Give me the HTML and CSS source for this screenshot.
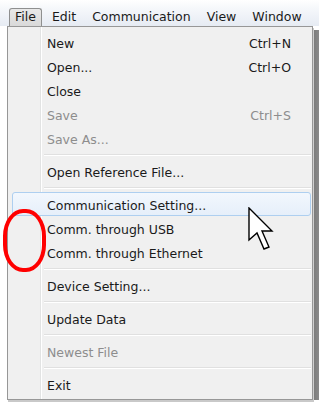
FILE: index.html
```html
<!DOCTYPE html>
<html>
<head>
<meta charset="utf-8">
<link rel="stylesheet" href="styles.css">
</head>
<body>
<div class="screen">
  <div class="menubar">
    <span class="mb-item active">File</span>
    <span class="mb-item">Edit</span>
    <span class="mb-item">Communication</span>
    <span class="mb-item">View</span>
    <span class="mb-item">Window</span>
  </div>
  <div class="area">
    <div class="menu">
      <div class="item"><span>New</span><span class="key">Ctrl+N</span></div>
      <div class="item"><span>Open...</span><span class="key">Ctrl+O</span></div>
      <div class="item"><span>Close</span></div>
      <div class="item disabled"><span>Save</span><span class="key">Ctrl+S</span></div>
      <div class="item disabled"><span>Save As...</span></div>
      <div class="sep"></div>
      <div class="item"><span>Open Reference File...</span></div>
      <div class="sep"></div>
      <div class="item hover"><span>Communication Setting...</span></div>
      <div class="item"><span>Comm. through USB</span></div>
      <div class="item"><span>Comm. through Ethernet</span></div>
      <div class="sep"></div>
      <div class="item"><span>Device Setting...</span></div>
      <div class="sep"></div>
      <div class="item"><span>Update Data</span></div>
      <div class="sep"></div>
      <div class="item disabled"><span>Newest File</span></div>
      <div class="sep"></div>
      <div class="item"><span>Exit</span></div>
    </div>
    <div class="behind"></div>
  </div>
  <div class="mark"></div>
  <svg class="cursor" width="26" height="44" viewBox="0 0 26 44">
    <polygon points="1,1 1,33 9,26 16,42 21,40 14,24 24,24" fill="#fff" stroke="#000" stroke-width="1.4" stroke-linejoin="miter"/>
  </svg>
</div>
</body>
</html>
```
FILE: styles.css
```css
html, body {
  margin: 0;
  padding: 0;
  background: #fff;
}
.screen {
  position: relative;
  width: 319px;
  height: 407px;
  overflow: hidden;
  font-family: "DejaVu Sans", sans-serif;
  font-size: 12.5px;
  color: #1a1a1a;
}
.menubar {
  height: 26px;
  box-sizing: border-box;
  padding: 8px 0 0 9px;
  display: flex;
  background: linear-gradient(to bottom, #ffffff 0px, #f6f8fb 8px, #e6ebf3 26px);
}
.mb-item {
  height: 18px;
  line-height: 16px;
  padding: 0 7px 0 5px;
  margin-right: 2px;
  border: 1px solid transparent;
  border-bottom: 0;
  box-sizing: border-box;
}
.mb-item.active {
  border: 1px solid #8e8f8f;
  border-bottom: 0;
  border-radius: 3px 3px 0 0;
  background: linear-gradient(to bottom, #e8e8e8, #d9d9d9);
  padding: 0 5px;
  margin-right: 4px;
}
.area {
  display: flex;
  align-items: flex-start;
}
.menu {
  margin-left: 7px;
  width: 306px;
  box-sizing: border-box;
  border: 1px solid #979797;
  padding: 3px 1px 3px 4px;
  background-color: #f0f0f0;
  background-image: linear-gradient(to right, transparent 32px, #e2e3e3 32px, #e2e3e3 33px, #ffffff 33px, #ffffff 34px, transparent 34px);
  box-shadow: 1px 2px 0 #c9c9c9;
}
.item {
  height: 24px;
  box-sizing: border-box;
  display: flex;
  align-items: center;
  justify-content: space-between;
  padding: 2px 19px 0 34px;
  border: 1px solid transparent;
  border-radius: 3px;
  white-space: nowrap;
}
.item.hover {
  border-color: #aecff0;
  background: linear-gradient(to bottom, #f2f7fd, #e6effa);
}
.item.disabled {
  color: #8d8d8d;
}
.sep {
  height: 9px;
  margin-left: 32px;
  background: linear-gradient(to bottom, transparent 4px, #e0e0e0 4px, #e0e0e0 5px, #ffffff 5px, #ffffff 6px, transparent 6px);
}
.behind {
  margin-top: 4px;
  width: 6px;
  height: 370px;
  background: linear-gradient(to right, #d0d0d0 0px, #d0d0d0 1px, #7d7d7d 1px, #8a8a8a 6px);
}
.mark {
  position: absolute;
  left: 3px;
  top: 209px;
  width: 43px;
  height: 63px;
  box-sizing: border-box;
  border: 4px solid #ff0000;
  border-radius: 20px / 27px;
}
.cursor {
  position: absolute;
  left: 248px;
  top: 207px;
}
```
